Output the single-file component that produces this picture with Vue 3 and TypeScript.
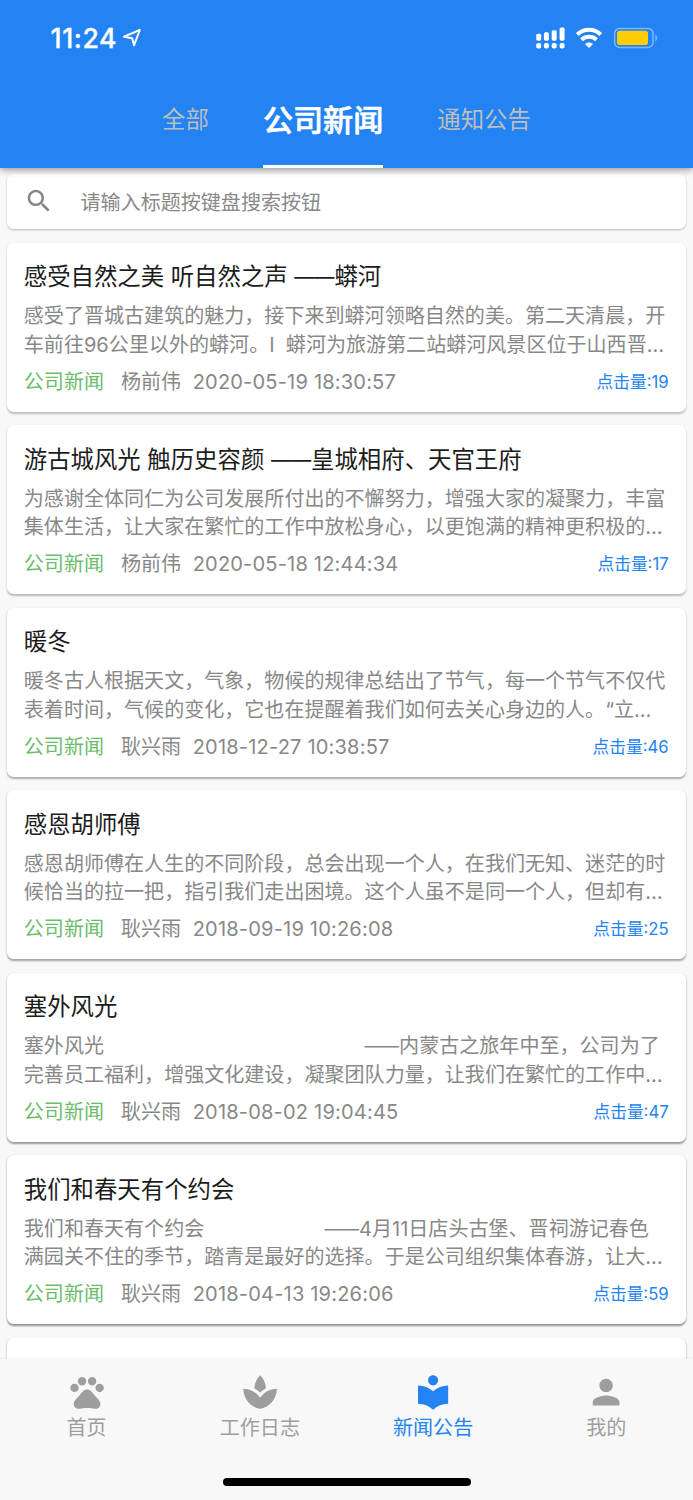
<script setup lang="ts">
interface Article {
  title: string
  lines: [string, string]
  author: string
  date: string
  time: string
  clicks: number
  shade: number
}

interface NavItem {
  label: string
  icon: string
  active?: boolean
}

interface Run {
  text: string
  dash: boolean
}

const tabs: { label: string; active: boolean }[] = [
  { label: '全部', active: false },
  { label: '公司新闻', active: true },
  { label: '通知公告', active: false },
]

const gap = (count: number): string => '\u3000'.repeat(count)

// Dashes are set smaller than the surrounding text, so they get their own run.
const runs = (text: string): Run[] =>
  text
    .split(/(——)/)
    .filter((part) => part.length > 0)
    .map((part) => ({ text: part, dash: part === '——' }))

const articles: Article[] = [
  {
    title: '感受自然之美 听自然之声 ——蟒河',
    lines: [
      '感受了晋城古建筑的魅力，接下来到蟒河领略自然的美。第二天清晨，开',
      '车前往96公里以外的蟒河。I  蟒河为旅游第二站蟒河风景区位于山西晋…',
    ],
    author: '杨前伟', date: '2020-05-19', time: '18:30:57', clicks: 19, shade: 0.24,
  },
  {
    title: '游古城风光 触历史容颜 ——皇城相府、天官王府',
    lines: [
      '为感谢全体同仁为公司发展所付出的不懈努力，增强大家的凝聚力，丰富',
      '集体生活，让大家在繁忙的工作中放松身心，以更饱满的精神更积极的…',
    ],
    author: '杨前伟', date: '2020-05-18', time: '12:44:34', clicks: 17, shade: 0.26,
  },
  {
    title: '暖冬',
    lines: [
      '暖冬古人根据天文，气象，物候的规律总结出了节气，每一个节气不仅代',
      '表着时间，气候的变化，它也在提醒着我们如何去关心身边的人。“立…',
    ],
    author: '耿兴雨', date: '2018-12-27', time: '10:38:57', clicks: 46, shade: 0.3,
  },
  {
    title: '感恩胡师傅',
    lines: [
      '感恩胡师傅在人生的不同阶段，总会出现一个人，在我们无知、迷茫的时',
      '候恰当的拉一把，指引我们走出困境。这个人虽不是同一个人，但却有…',
    ],
    author: '耿兴雨', date: '2018-09-19', time: '10:26:08', clicks: 25, shade: 0.34,
  },
  {
    title: '塞外风光',
    lines: [
      `塞外风光${gap(13)}——内蒙古之旅年中至，公司为了`,
      '完善员工福利，增强文化建设，凝聚团队力量，让我们在繁忙的工作中…',
    ],
    author: '耿兴雨', date: '2018-08-02', time: '19:04:45', clicks: 47, shade: 0.38,
  },
  {
    title: '我们和春天有个约会',
    lines: [
      `我们和春天有个约会${gap(6)}——4月11日店头古堡、晋祠游记春色`,
      '满园关不住的季节，踏青是最好的选择。于是公司组织集体春游，让大…',
    ],
    author: '耿兴雨', date: '2018-04-13', time: '19:26:06', clicks: 59, shade: 0.42,
  },
]

const navItems: NavItem[] = [
  {
    label: '首页',
    icon: 'M2 9.5a2.5 2.5 0 1 0 5 0a2.5 2.5 0 1 0-5 0zM6.5 5.5a2.5 2.5 0 1 0 5 0a2.5 2.5 0 1 0-5 0zM12.5 5.5a2.5 2.5 0 1 0 5 0a2.5 2.5 0 1 0-5 0zM17 9.5a2.5 2.5 0 1 0 5 0a2.5 2.5 0 1 0-5 0zM17.34 14.86c-.87-1.02-1.6-1.89-2.48-2.91-.46-.54-1.05-1.08-1.75-1.32-.11-.04-.22-.07-.33-.09-.25-.04-.52-.04-.78-.04s-.53 0-.79.05c-.11.02-.22.05-.33.09-.7.24-1.28.78-1.75 1.32-.87 1.02-1.6 1.89-2.48 2.91-1.31 1.31-2.92 2.76-2.62 4.79.29 1.02 1.02 2.03 2.33 2.32.73.15 3.06-.44 5.54-.44h.18c2.48 0 4.81.58 5.54.44 1.31-.29 2.04-1.31 2.33-2.32.31-2.04-1.3-3.49-2.61-4.8z',
  },
  {
    label: '工作日志',
    icon: 'M15.49 9.63c-.18-2.79-1.31-5.51-3.43-7.63-2.14 2.14-3.32 4.86-3.55 7.63 1.28.68 2.46 1.56 3.49 2.63 1.03-1.06 2.21-1.94 3.49-2.63zM12 15.45C9.85 12.17 6.18 10 2 10c0 5.32 3.36 9.82 8.03 11.49.63.23 1.29.4 1.97.51.68-.12 1.33-.29 1.97-.51C18.64 19.82 22 15.32 22 10c-4.18 0-7.85 2.17-10 5.45z',
  },
  {
    label: '新闻公告',
    icon: 'M12 11.55C9.64 9.35 6.48 8 3 8v11c3.48 0 6.64 1.35 9 3.55 2.36-2.19 5.52-3.55 9-3.55V8c-3.48 0-6.64 1.35-9 3.55zM12 8c1.66 0 3-1.34 3-3s-1.34-3-3-3-3 1.34-3 3 1.34 3 3 3z',
    active: true,
  },
  {
    label: '我的',
    icon: 'M12 12c2.21 0 4-1.79 4-4s-1.79-4-4-4-4 1.79-4 4 1.79 4 4 4zm0 2c-2.67 0-8 1.34-8 4v2h16v-2c0-2.66-5.33-4-8-4z',
  },
]
</script>

<template>
  <div class="screen">
    <header class="header">
      <div class="status">
        <div class="clock">
          <span class="clock-text">11:24</span>
          <svg class="locate" viewBox="0 0 20 20"><path d="M2 8.7 17.8 2 12.1 17.2 10.2 10.2Z" /></svg>
        </div>
        <div class="indicators">
          <svg class="signal" viewBox="0 0 30 22">
            <rect x="0.2" y="6.7" width="5" height="7" rx="1.6" />
            <rect x="7.9" y="5.3" width="5" height="8.4" rx="1.6" />
            <rect x="15.7" y="3.2" width="5" height="10.5" rx="1.6" />
            <rect x="23.6" y="0.5" width="5" height="13.2" rx="1.6" />
            <rect x="0.2" y="16" width="5" height="5.6" rx="1.8" />
            <rect x="7.9" y="16" width="5" height="5.6" rx="1.8" />
            <rect x="15.7" y="16" width="5" height="5.6" rx="1.8" />
            <rect x="23.6" y="16" width="5" height="5.6" rx="1.8" />
          </svg>
          <svg class="wifi" viewBox="0 0 28 22">
            <path class="arc" d="M2.3 7.5C9.1 1.2 18.9 1.2 25.7 7.5" />
            <path class="arc" d="M6.5 12.7c4.3-3.9 10.7-3.9 15 0" />
            <path class="dot" d="M14 20.9 9.9 17c2.4-2.1 5.8-2.1 8.2 0Z" />
          </svg>
          <svg class="battery" viewBox="0 0 46 22">
            <rect class="shell" x="1.6" y="1.4" width="38.4" height="19" rx="5" />
            <rect class="charge" x="4" y="3.8" width="31" height="14.2" rx="2.8" />
            <path class="tip" d="M42.3 7.5c2.6 1.6 2.6 5.4 0 7Z" />
          </svg>
        </div>
      </div>
      <nav class="tabs">
        <div v-for="tab in tabs" :key="tab.label" class="tab" :class="{ active: tab.active }">{{ tab.label }}</div>
      </nav>
    </header>

    <main class="content">
      <div class="search">
        <svg class="search-icon" viewBox="0 0 24 24">
          <path d="M15.5 14h-.79l-.28-.27C15.41 12.59 16 11.11 16 9.5 16 5.91 13.09 3 9.5 3S3 5.91 3 9.5 5.91 16 9.5 16c1.61 0 3.09-.59 4.23-1.57l.27.28v.79l5 4.99L20.49 19l-4.99-5zm-6 0C7.01 14 5 11.99 5 9.5S7.01 5 9.5 5 14 7.01 14 9.5 11.99 14 9.5 14z" />
        </svg>
        <span>请输入标题按键盘搜索按钮</span>
      </div>

      <article
        v-for="item in articles"
        :key="item.title"
        class="card"
        :style="{ '--shade': item.shade }"
      >
        <h2 class="title"><span v-for="(run, i) in runs(item.title)" :key="i" :class="{ dash: run.dash }">{{ run.text }}</span></h2>
        <p v-for="line in item.lines" :key="line" class="line"><span v-for="(run, i) in runs(line)" :key="i" :class="{ dash: run.dash }">{{ run.text }}</span></p>
        <footer class="meta">
          <span class="category">公司新闻</span>
          <span class="author">{{ item.author }}</span>
          <span class="date">{{ item.date }} {{ item.time }}</span>
          <span class="clicks">点击量:{{ item.clicks }}</span>
        </footer>
      </article>
      <div class="card next"></div>
    </main>

    <nav class="bottom">
      <div class="items">
        <div v-for="item in navItems" :key="item.label" class="item" :class="{ active: item.active }">
          <svg class="item-icon" viewBox="0 0 24 24"><path :d="item.icon" /></svg>
          <span>{{ item.label }}</span>
        </div>
      </div>
      <div class="home-bar"></div>
    </nav>
  </div>
</template>

<style>
body {
  margin: 0;
  background: #f8f8f8;
}
</style>

<style scoped>
.screen {
  display: flex;
  flex-direction: column;
  width: 693px;
  height: 1500px;
  overflow: hidden;
  background: #f8f8f8;
  font-family: Inter, "Noto Sans CJK SC", sans-serif;
  font-size: 20.06px;
  font-weight: 400;
  color: #888;
}

.header {
  position: relative;
  z-index: 1;
  flex: none;
  height: 167.5px;
  background: #2383f3;
  box-shadow: 0 2px 7px rgba(0, 0, 0, 0.4);
}

.status {
  display: flex;
  justify-content: space-between;
  align-items: center;
  height: 76px;
  box-sizing: border-box;
  padding: 0 34.5px 0 50.5px;
}

.clock,
.indicators {
  display: flex;
  align-items: center;
}

.clock-text {
  font-size: 26.6px;
  font-weight: 500;
  line-height: 32px;
  letter-spacing: 0.6px;
  color: #fff;
  -webkit-text-stroke: 0.3px #fff;
}

.locate {
  width: 20px;
  height: 20px;
  margin-left: 5px;
  fill: none;
  stroke: #fff;
  stroke-width: 2;
  stroke-linejoin: round;
}

.signal {
  width: 30px;
  height: 22px;
  fill: #fff;
}

.wifi {
  width: 28px;
  height: 22px;
  margin-left: 9px;
}

.arc {
  fill: none;
  stroke: #fff;
  stroke-width: 4.1;
}

.dot {
  fill: #fff;
}

.battery {
  width: 46px;
  height: 22px;
  margin-left: 9.5px;
}

.shell {
  fill: none;
  stroke: #7db5f8;
  stroke-width: 1.5;
}

.charge {
  fill: #fecd06;
}

.tip {
  fill: #7db5f8;
}

.tabs {
  display: flex;
  justify-content: center;
  gap: 54px;
  height: 91.5px;
}

.tab {
  box-sizing: border-box;
  height: 91.5px;
  font-size: 23.42px;
  line-height: 87px;
  color: #bdbdbd;
  white-space: nowrap;
}

.tab.active {
  border-bottom: 3.5px solid #fff;
  font-size: 30.1px;
  font-weight: 500;
  line-height: 88px;
  color: #fff;
  -webkit-text-stroke: 0.6px #fff;
}

.content {
  flex: 1;
  min-height: 0;
  overflow: hidden;
  padding: 6.2px 6.8px 0 7px;
}

.search {
  display: flex;
  align-items: center;
  box-sizing: border-box;
  height: 55.5px;
  margin-bottom: 13.5px;
  padding-left: 16.5px;
  border-radius: 6.7px;
  background: #fff;
  box-shadow: 0 1px 2px rgba(0, 0, 0, 0.25);
  color: #888;
}

.search-icon {
  width: 30px;
  height: 30px;
  margin-right: 27px;
  fill: #858585;
}

.card {
  box-sizing: border-box;
  height: 169px;
  margin-bottom: 13.5px;
  padding: 17.5px 17.5px 0 16.8px;
  border-radius: 6.7px;
  background: #fff;
  box-shadow: 0 1.4px 2px rgba(0, 0, 0, var(--shade, 0.42));
}

.title {
  margin: 0 0 9.3px;
  font-size: 23.4px;
  font-weight: 400;
  line-height: 33px;
  color: #1c1c1c;
  white-space: pre;
}

.line {
  margin: 0;
  line-height: 28.5px;
  white-space: pre;
}

.dash {
  font-size: 0.86em;
  line-height: 0;
  vertical-align: 0.05em;
}

.meta {
  display: flex;
  align-items: center;
  height: 28px;
  margin-top: 8.5px;
  line-height: 28px;
  white-space: nowrap;
}

.category {
  color: #6bbd6b;
}

.author {
  margin-left: 17px;
}

.date {
  margin-left: 11.5px;
  letter-spacing: 0.18px;
}

.clicks {
  margin-left: auto;
  font-size: 16.73px;
  color: #2383f3;
}

.bottom {
  position: relative;
  z-index: 1;
  display: flex;
  flex: none;
  flex-direction: column;
  align-items: center;
  height: 141px;
  background: #f8f8f8;
  box-shadow: 0 -1px 2px rgba(0, 0, 0, 0.04);
}

.items {
  display: flex;
  width: 100%;
  height: 119px;
}

.item {
  display: flex;
  flex: 1;
  flex-direction: column;
  align-items: center;
  padding-top: 13px;
  line-height: 32.5px;
  color: #9e9e9e;
}

.item-icon {
  width: 40.2px;
  height: 40.2px;
  fill: currentColor;
}

.item.active {
  color: #2383f3;
}

.home-bar {
  width: 248px;
  height: 8px;
  border-radius: 4px;
  background: #000;
}
</style>
